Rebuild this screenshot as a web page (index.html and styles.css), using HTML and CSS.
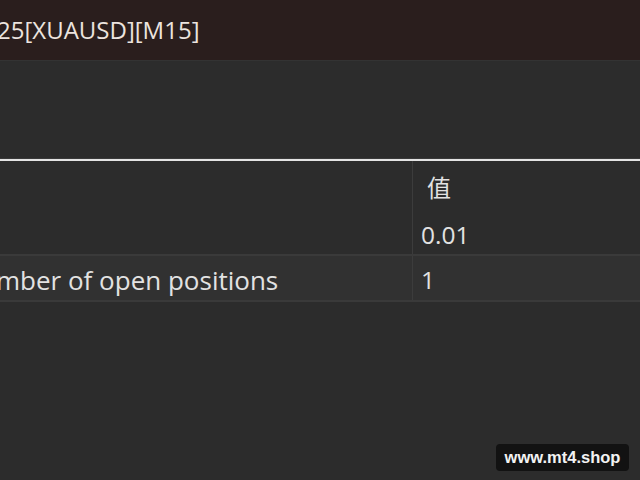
FILE: index.html
```html
<!DOCTYPE html>
<html>
<head>
<meta charset="utf-8">
<link rel="stylesheet" href="styles.css">
</head>
<body>
<div class="titlebar"><span class="title">25[XUAUSD][M15]</span></div>
<div class="toolbar"></div>
<div class="table">
  <div class="row head">
    <div class="cell name"></div>
    <div class="cell val">值</div>
  </div>
  <div class="row r1">
    <div class="cell name"></div>
    <div class="cell val">0.01</div>
  </div>
  <div class="row r2">
    <div class="cell name">mber of open positions</div>
    <div class="cell val">1</div>
  </div>
</div>
<div class="watermark">www.mt4.shop</div>
</body>
</html>
```
FILE: styles.css
```css
html, body {
  margin: 0;
  padding: 0;
  width: 640px;
  height: 480px;
  overflow: hidden;
  background: #2c2c2c;
  font-family: "Open Sans", Lato, "Noto Sans CJK SC", sans-serif;
  color: #e2e2e2;
}
.titlebar {
  height: 60px;
  background: #2a1e1d;
  border-bottom: 1px solid #333333;
  display: flex;
  align-items: center;
}
.title {
  font-size: 24px;
  color: #ece4df;
  margin-left: -3px;
  padding-bottom: 2px;
}
.toolbar {
  height: 98px;
  background: #2c2c2c;
}
.table {
  border-top: 2px solid #e4e4e4;
  box-shadow: 0 -1px 0 #3a3a3a;
}
.row {
  display: grid;
  grid-template-columns: 413px 1fr;
}
.cell {
  font-size: 24.5px;
  display: flex;
  align-items: center;
  white-space: nowrap;
}
.name {
  border-right: 1px solid #3c3c3c;
}
.val {
  padding-left: 8px;
}
.head {
  height: 50px;
}
.head .val {
  padding-left: 14px;
  font-size: 24px;
  font-family: "Noto Sans CJK SC", sans-serif;
}
.r1 {
  height: 43px;
  border-bottom: 2px solid #3a3a3a;
}
.r1 .val { padding-top: 4px; }
.r2 {
  height: 44px;
  background: #313131;
  border-bottom: 2px solid #3a3a3a;
}
.r2 .cell { padding-top: 3px; }
.r2 .name { margin-left: -4px; font-size: 26px; }
.watermark {
  position: absolute;
  left: 496px;
  top: 444px;
  width: 133px;
  height: 27px;
  background: #121212;
  border-radius: 4px;
  color: #f2f2f2;
  font-family: "Liberation Sans", Arial, sans-serif;
  font-weight: bold;
  font-size: 16.5px;
  display: flex;
  align-items: center;
  justify-content: center;
}
```
